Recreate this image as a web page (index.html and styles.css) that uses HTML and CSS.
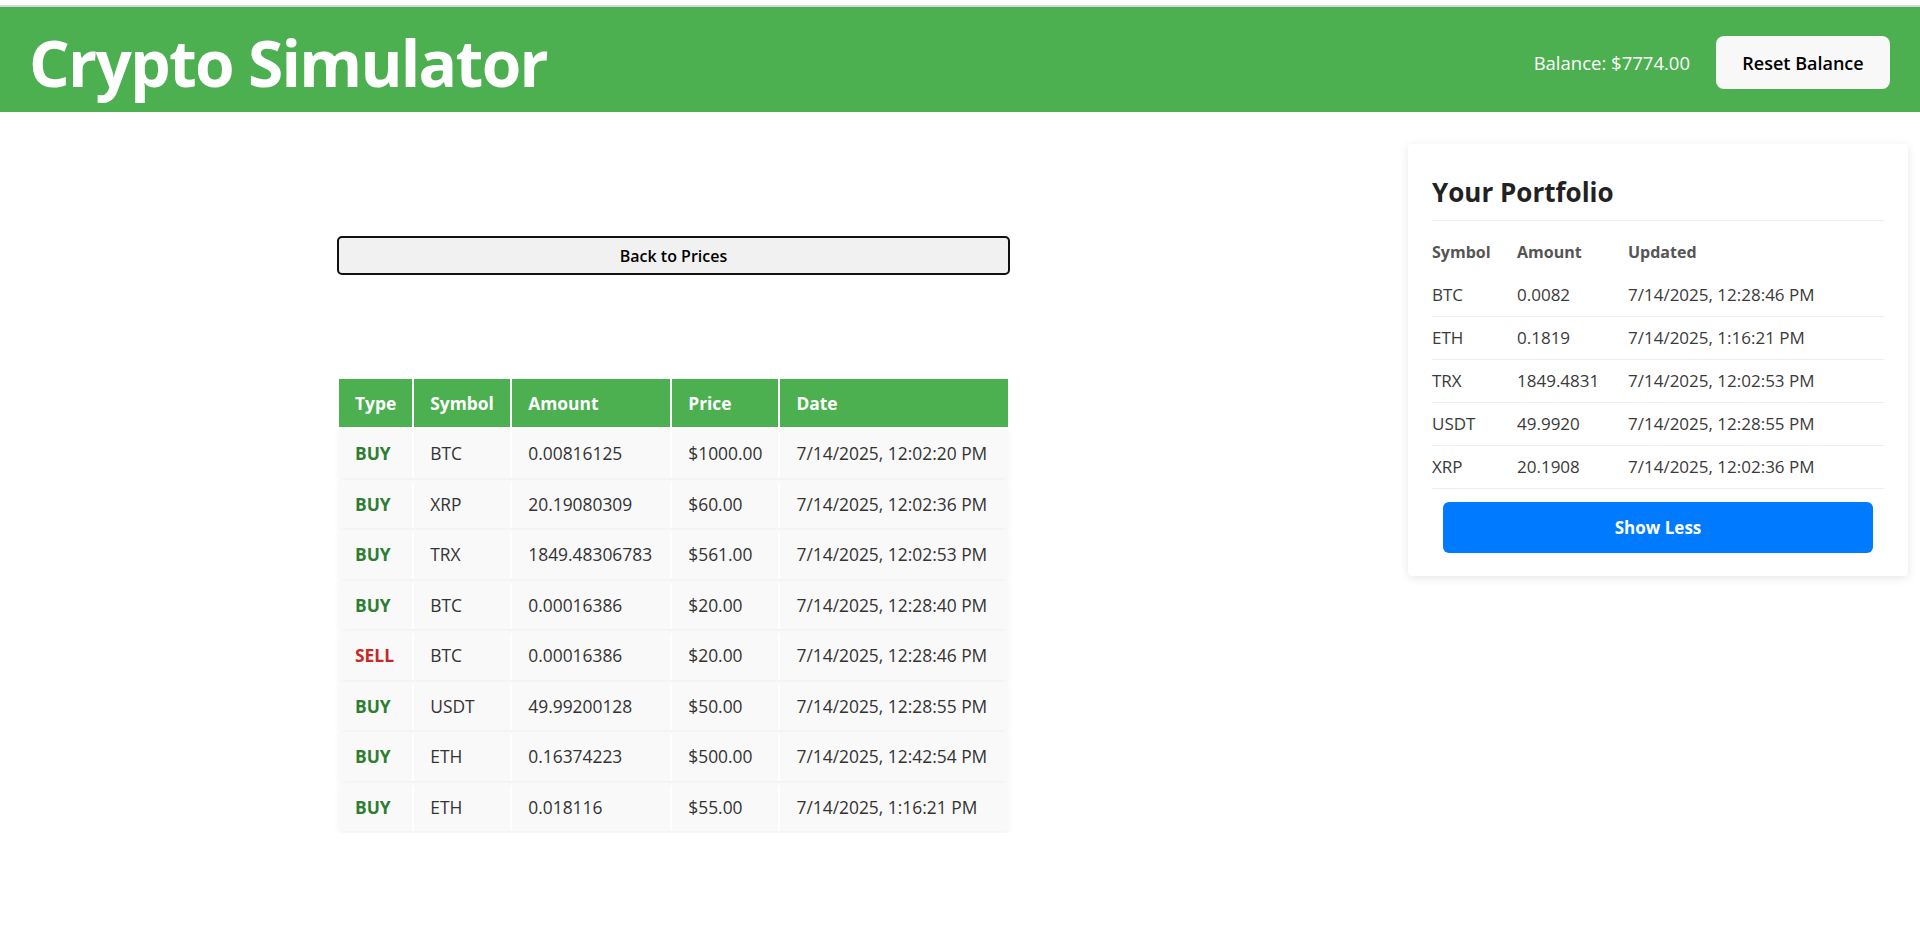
FILE: index.html
```html
<!DOCTYPE html>
<html lang="en">
<head>
<meta charset="utf-8">
<title>Crypto Simulator</title>
<link rel="stylesheet" href="styles.css">
</head>
<body>
<div class="topline"></div>
<header class="app-header">
  <h1 class="app-title">Crypto Simulator</h1>
  <div class="header-right">
    <span class="balance">Balance: $7774.00</span>
    <button class="reset-btn">Reset Balance</button>
  </div>
</header>
<div class="layout">
  <main class="content">
    <section class="history">
      <button class="back-btn">Back to Prices</button>
      <table class="tx-table">
        <thead>
          <tr><th class="c1">Type</th><th class="c2">Symbol</th><th class="c3">Amount</th><th class="c4">Price</th><th class="c5">Date</th></tr>
        </thead>
        <tbody>
          <tr><td class="buy">BUY</td><td>BTC</td><td>0.00816125</td><td>$1000.00</td><td>7/14/2025, 12:02:20 PM</td></tr>
          <tr><td class="buy">BUY</td><td>XRP</td><td>20.19080309</td><td>$60.00</td><td>7/14/2025, 12:02:36 PM</td></tr>
          <tr><td class="buy">BUY</td><td>TRX</td><td>1849.48306783</td><td>$561.00</td><td>7/14/2025, 12:02:53 PM</td></tr>
          <tr><td class="buy">BUY</td><td>BTC</td><td>0.00016386</td><td>$20.00</td><td>7/14/2025, 12:28:40 PM</td></tr>
          <tr><td class="sell">SELL</td><td>BTC</td><td>0.00016386</td><td>$20.00</td><td>7/14/2025, 12:28:46 PM</td></tr>
          <tr><td class="buy">BUY</td><td>USDT</td><td>49.99200128</td><td>$50.00</td><td>7/14/2025, 12:28:55 PM</td></tr>
          <tr><td class="buy">BUY</td><td>ETH</td><td>0.16374223</td><td>$500.00</td><td>7/14/2025, 12:42:54 PM</td></tr>
          <tr><td class="buy">BUY</td><td>ETH</td><td>0.018116</td><td>$55.00</td><td>7/14/2025, 1:16:21 PM</td></tr>
        </tbody>
      </table>
    </section>
  </main>
  <aside class="portfolio">
    <h2 class="portfolio-title">Your Portfolio</h2>
    <table class="pf-table">
      <thead>
        <tr><th class="p1">Symbol</th><th class="p2">Amount</th><th>Updated</th></tr>
      </thead>
      <tbody>
        <tr><td>BTC</td><td>0.0082</td><td>7/14/2025, 12:28:46 PM</td></tr>
        <tr><td>ETH</td><td>0.1819</td><td>7/14/2025, 1:16:21 PM</td></tr>
        <tr><td>TRX</td><td>1849.4831</td><td>7/14/2025, 12:02:53 PM</td></tr>
        <tr><td>USDT</td><td>49.9920</td><td>7/14/2025, 12:28:55 PM</td></tr>
        <tr><td>XRP</td><td>20.1908</td><td>7/14/2025, 12:02:36 PM</td></tr>
      </tbody>
    </table>
    <button class="show-less">Show Less</button>
  </aside>
</div>
</body>
</html>
```
FILE: styles.css
```css
* { box-sizing: border-box; }
body {
  margin: 0;
  font-family: "Open Sans", "Noto Sans", sans-serif;
  color: #333;
  background: #fff;
}
.topline {
  height: 7px;
  border-bottom: 2px solid #d8d8d8;
  background: #fff;
}
.app-header {
  height: 105px;
  background: #4caf50;
  display: flex;
  align-items: center;
  justify-content: space-between;
  padding: 6px 30px 0 29px;
}
.app-title {
  margin: 0;
  color: #fff;
  font-size: 64px;
  font-weight: 700;
  line-height: 1;
  letter-spacing: -1.7px;
}
.header-right {
  display: flex;
  align-items: center;
  gap: 26px;
}
.balance {
  color: #fff;
  font-size: 18.5px;
}
.reset-btn {
  font-family: inherit;
  background: #f8f8f8;
  color: #000;
  border: none;
  border-radius: 8px;
  font-size: 18px;
  font-weight: 600;
  height: 53px;
  width: 174px;
  padding: 0;
}
.layout {
  display: flex;
  align-items: flex-start;
}
.content {
  flex: 1;
  display: flex;
  justify-content: center;
  padding-top: 124px;
}
.history {
  width: 673px;
}
.back-btn {
  display: block;
  width: 100%;
  height: 39px;
  background: #f1f1f1;
  border: 2px solid #111;
  border-radius: 5px;
  font-family: inherit;
  font-size: 16px;
  font-weight: 600;
  color: #000;
}
.tx-table {
  margin-top: 102px;
  width: 100%;
  border-spacing: 2px;
  font-size: 17.4px;
}
.tx-table th {
  background: #4caf50;
  color: #fff;
  font-weight: 700;
  text-align: left;
  padding: 12px 16px;
  line-height: 24px;
  height: 48px;
}
.tx-table .c1 { width: 72px; }
.tx-table .c2 { width: 96px; }
.tx-table .c3 { width: 158px; }
.tx-table .c4 { width: 106px; }
.tx-table td {
  background: #f9f9f9;
  padding: 12px 16px;
  line-height: 24px;
  height: 48.5px;
  color: #333;
}
.tx-table tbody tr {
  box-shadow: 0 2px 6px rgba(0, 0, 0, 0.06);
}
.tx-table td.buy { color: #2e7d32; font-weight: 700; }
.tx-table td.sell { color: #c62828; font-weight: 700; }
.portfolio {
  width: 500px;
  margin: 32px 12px 0 61px;
  background: #fff;
  border-radius: 4px;
  box-shadow: 0 2px 10px rgba(0, 0, 0, 0.1);
  padding: 24px 24px 23px;
}
.portfolio-title {
  margin: 7px 0 0;
  font-size: 26px;
  line-height: 34px;
  font-weight: 700;
  color: #222;
  padding-bottom: 11px;
  border-bottom: 1px solid #eee;
}
.pf-table {
  width: 100%;
  margin-top: 10px;
  border-collapse: collapse;
}
.pf-table th {
  text-align: left;
  font-size: 16px;
  font-weight: 700;
  color: #555;
  padding: 10px 0;
  line-height: 23px;
  height: 43px;
}
.pf-table .p1 { width: 85px; }
.pf-table .p2 { width: 111px; }
.pf-table td {
  font-size: 17px;
  color: #3a3a3a;
  padding: 10px 0;
  line-height: 22px;
  border-bottom: 1px solid #eee;
}
.show-less {
  display: block;
  width: 95%;
  margin: 13px auto 0;
  height: 51px;
  background: #007bff;
  color: #fff;
  border: none;
  border-radius: 6px;
  font-family: inherit;
  font-size: 17px;
  font-weight: 700;
}
```
